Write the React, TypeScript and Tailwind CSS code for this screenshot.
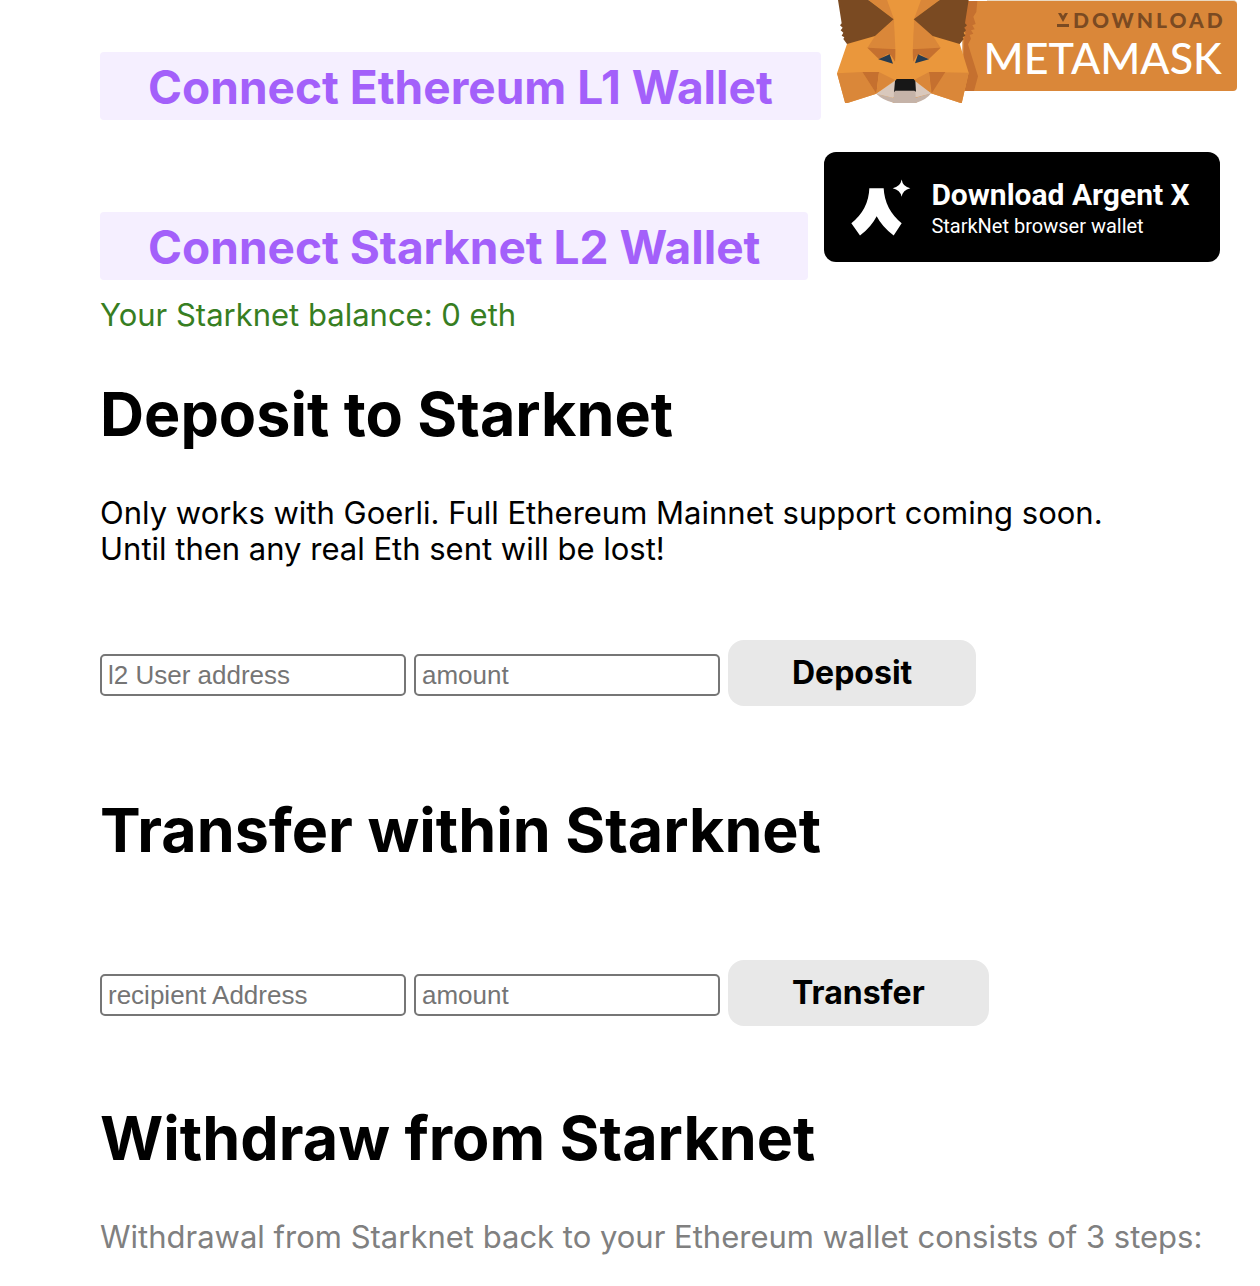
import React, { useState } from 'react';

const headingCls = 'text-[61px] leading-[76px] font-bold';
const textCls = 'text-[31px] leading-[36px]';
const connectCls = 'h-[68px] shrink-0 px-12 pt-0.5 rounded bg-[#f5efff] text-[#a360fa] text-[46px] leading-[66px] font-bold whitespace-nowrap';
const inputCls = 'w-[306px] h-[42px] mt-1 px-1.5 border-2 border-[#767676] rounded-[5px] bg-white font-["Liberation_Sans",sans-serif] text-[26px] leading-[30px] placeholder:text-[#757575]';
const actionCls = 'h-[66px] px-16 rounded-2xl bg-[#e8e8e8] text-[32px] leading-[66px] font-bold';

function MetamaskFox() {
  return (
    <svg viewBox="54 0 450 309" className="w-[150px] h-[103px] shrink-0" aria-hidden="true">
      {/* ribbon behind the ear */}
      <path d="M430 3H504V273H430Z" fill="#da8739" />
      <path d="M440 3H475L472 36L463 50L470 72L460 76L467 88L456 91L463 101L452 105L456 116L447 133L477 229L465 273H430Z" fill="#c5702f" />
      {/* face */}
      <path d="M150 0H360L440 100L422 131L449 218L428 310L336 280L290 309H225L172 281L79 311L54 220L84 132L120 60Z" fill="#ea973c" />
      <path d="M204 0L226 58L285 58L306 0Z" fill="#ea973c" />
      <path d="M150 0H204L225 58Z" fill="#da8739" />
      <path d="M306 0H360L285 58Z" fill="#da8739" />
      <path d="M225 58L168 108L145 144L232 146Z" fill="#da8739" />
      <path d="M285 58L342 108L365 144L279 146Z" fill="#da8739" />
      <path d="M145 143L231 147L228 185L216 166L205 163L180 178Z" fill="#c5702f" />
      <path d="M365 143L279 147L283 185L294 166L304 163L329 178Z" fill="#c5702f" />
      <path d="M225 58H285L278 237H233Z" fill="#ea973c" />
      <path d="M54 220L130 216L172 281L79 311Z" fill="#da8739" />
      <path d="M449 218L330 216L336 280L428 310Z" fill="#da8739" />
      <path d="M130 216L180 216L172 281Z" fill="#c5702f" />
      <path d="M379 216L330 216L338 280Z" fill="#c5702f" />
      <path d="M180 216L228 240L172 281Z" fill="#da8739" />
      <path d="M330 216L285 240L336 280Z" fill="#da8739" />
      {/* eyes */}
      <path d="M178 178L212 163L222 191Z" fill="#263b50" />
      <path d="M330 178L297 163L288 190Z" fill="#263b50" />
      {/* muzzle */}
      <path d="M172 281L230 241L285 241L336 280L290 292H224Z" fill="#d9c8bc" />
      <path d="M172 281L224 294V272H290V293L336 280Q325 298 290 309H226Q190 300 172 281Z" fill="#c5b3a8" />
      <path d="M172 281L226 250L223 294Z" fill="#d9c8bc" />
      <path d="M336 280L288 250L291 292Z" fill="#d9c8bc" />
      <path d="M233 237H284L289 243L291 275L286 272H229L225 277L228 243Z" fill="#171717" />
      {/* ears */}
      <path d="M57 0H148L224 58L168 108L84 132L73 117L76 112L68 107L73 98L65 91L71 83L63 76L68 70Z" fill="#7a4a22" />
      <path d="M449 0H362L284 58L341 108L422 132L434 117L431 112L439 107L434 98L441 91L436 83L444 76L438 70Z" fill="#7a4a22" />
    </svg>
  );
}

function MetamaskBanner() {
  return (
    <a href="#metamask" className="flex items-start shrink-0 font-[Lato,sans-serif]">
      <MetamaskFox />
      <span className="flex flex-col items-end w-[250px] h-[91px] pt-[7px] pr-[11px] border-t border-[#ead9c2] rounded-r-sm bg-[#da8739]">
        <span className="flex items-center gap-1 text-[#7a4a22] text-[21px] leading-6 font-black tracking-[3px]">
          <svg viewBox="0 0 12 15" className="w-3 h-[15px]" aria-hidden="true">
            <path d="M1 0H4L6 3L8 0H11L6 9ZM0 11H12V14H0Z" fill="currentColor" />
          </svg>
          DOWNLOAD
        </span>
        <span className="pr-1 text-white text-[43px] leading-[52px] font-medium">METAMASK</span>
      </span>
    </a>
  );
}

function ArgentBanner() {
  return (
    <a
      href="#argent"
      className="flex items-center shrink-0 w-[396px] h-[110px] pl-[27px] gap-5 rounded-xl bg-black text-white font-[Roboto,sans-serif]"
    >
      <svg viewBox="107 115 180 170" className="w-[60px] h-[57px]" aria-hidden="true">
        <path d="M162 142H205Q208 205 259 247L235 284Q200 257 184 226Q168 258 134 284L108 247Q160 205 162 142Z" fill="#fff" />
        <path d="M259 116Q262 138 285 142Q262 147 259 168Q255 147 232 142Q255 138 259 116Z" fill="#fff" />
      </svg>
      <span className="flex flex-col pt-1.5 whitespace-nowrap">
        <span className="text-[30px] leading-8 font-bold">Download Argent X</span>
        <span className="text-[20px] leading-[30px]">StarkNet browser wallet</span>
      </span>
    </a>
  );
}

interface ActionFormProps {
  addressLabel: string;
  action: string;
}

function ActionForm({ addressLabel, action }: ActionFormProps) {
  const [address, setAddress] = useState('');
  const [amount, setAmount] = useState('');

  return (
    <form className="flex flex-wrap items-center gap-2" onSubmit={e => e.preventDefault()}>
      <input type="text" aria-label={addressLabel} placeholder={addressLabel} className={inputCls}
        value={address} onChange={e => setAddress(e.target.value)} />
      <input type="text" aria-label="amount" placeholder="amount" className={inputCls}
        value={amount} onChange={e => setAmount(e.target.value)} />
      <button type="submit" className={actionCls}>{action}</button>
    </form>
  );
}

export default function App() {
  return (
    <main className="pl-[100px] pb-8 overflow-x-hidden bg-white text-black font-[Inter,sans-serif]">
      {/* ── Wallets ── */}
      <div className="flex items-start gap-4">
        <button type="button" className={`${connectCls} mt-[52px]`}>Connect Ethereum L1 Wallet</button>
        <MetamaskBanner />
      </div>
      <div className="flex items-end gap-4 mt-8">
        <button type="button" className={connectCls}>Connect Starknet L2 Wallet</button>
        <div className="pb-[18px]">
          <ArgentBanner />
        </div>
      </div>
      <p className={`${textCls} mt-[17px] text-[#377e22]`}>Your Starknet balance: 0 eth</p>

      {/* ── Deposit ── */}
      <h1 className={`${headingCls} mt-[43px]`}>Deposit to Starknet</h1>
      <p className={`${textCls} mt-[43px] mb-[73px]`}>
        Only works with Goerli. Full Ethereum Mainnet support coming soon.
        <br />
        Until then any real Eth sent will be lost!
      </p>
      <ActionForm addressLabel="l2 User address" action="Deposit" />

      {/* ── Transfer ── */}
      <h1 className={`${headingCls} mt-[86px] mb-[92px]`}>Transfer within Starknet</h1>
      <ActionForm addressLabel="recipient Address" action="Transfer" />

      {/* ── Withdraw ── */}
      <h1 className={`${headingCls} mt-[74px]`}>Withdraw from Starknet</h1>
      <p className={`${textCls} mt-[43px] text-[#808080]`}>
        Withdrawal from Starknet back to your Ethereum wallet consists of 3 steps:
      </p>
    </main>
  );
}
